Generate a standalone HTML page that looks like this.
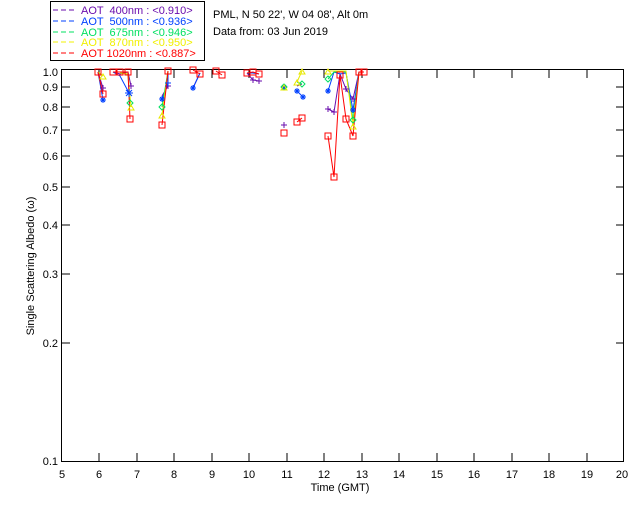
<!DOCTYPE html>
<html><head><style>
body{margin:0;background:#fff;}
svg text{font-family:"Liberation Sans",sans-serif;font-size:11px;}
</style></head><body>
<svg width="640" height="512" xmlns="http://www.w3.org/2000/svg">
<rect width="640" height="512" fill="#fff"/>
<rect x="50.5" y="1.5" width="154" height="59" fill="#fff" stroke="#000"/>
<g font-size="11">
<line x1="53" y1="10" x2="76" y2="10" stroke="#6a0dad" stroke-dasharray="5,3"/><text x="81" y="14" fill="#6a0dad" xml:space="preserve">AOT  400nm : &lt;0.910&gt;</text>
<line x1="53" y1="21" x2="76" y2="21" stroke="#0040ff" stroke-dasharray="5,3"/><text x="81" y="25" fill="#0040ff" xml:space="preserve">AOT  500nm : &lt;0.936&gt;</text>
<line x1="53" y1="32" x2="76" y2="32" stroke="#00e060" stroke-dasharray="5,3"/><text x="81" y="36" fill="#00e060" xml:space="preserve">AOT  675nm : &lt;0.946&gt;</text>
<line x1="53" y1="42" x2="76" y2="42" stroke="#f0f000" stroke-dasharray="5,3"/><text x="81" y="46" fill="#f0f000" xml:space="preserve">AOT  870nm : &lt;0.950&gt;</text>
<line x1="53" y1="53" x2="76" y2="53" stroke="#f00" stroke-dasharray="5,3"/><text x="81" y="57" fill="#f00" xml:space="preserve">AOT 1020nm : &lt;0.887&gt;</text>
</g>
<text x="213" y="18">PML, N 50 22', W 04 08', Alt 0m</text>
<text x="213" y="35">Data from: 03 Jun 2019</text>
<rect x="61.5" y="69.5" width="562" height="392" fill="none" stroke="#000"/>
<g stroke="#000">
<path d="M99 461v-8M99 70v8M137 461v-8M137 70v8M174 461v-8M174 70v8M212 461v-8M212 70v8M249 461v-8M249 70v8M287 461v-8M287 70v8M324 461v-8M324 70v8M362 461v-8M362 70v8M399 461v-8M399 70v8M437 461v-8M437 70v8M474 461v-8M474 70v8M512 461v-8M512 70v8M549 461v-8M549 70v8M587 461v-8M587 70v8"/>
<path d="M62 87h8M624 87h-8M62 107h8M624 107h-8M62 130h8M624 130h-8M62 156h8M624 156h-8M62 187h8M624 187h-8M62 225h8M624 225h-8M62 274h8M624 274h-8M62 343h8M624 343h-8"/>
</g>
<g font-size="10" text-anchor="end">
<text x="58" y="76">1.0</text><text x="58" y="91">0.9</text><text x="58" y="111">0.8</text><text x="58" y="134">0.7</text><text x="58" y="160">0.6</text><text x="58" y="191">0.5</text><text x="58" y="229">0.4</text><text x="58" y="278">0.3</text><text x="58" y="347">0.2</text><text x="58" y="465">0.1</text>
</g>
<g font-size="10" text-anchor="middle">
<text x="62" y="478">5</text><text x="99" y="478">6</text><text x="137" y="478">7</text><text x="174" y="478">8</text><text x="212" y="478">9</text><text x="249" y="478">10</text><text x="287" y="478">11</text><text x="324" y="478">12</text><text x="362" y="478">13</text><text x="399" y="478">14</text><text x="437" y="478">15</text><text x="474" y="478">16</text><text x="512" y="478">17</text><text x="549" y="478">18</text><text x="587" y="478">19</text><text x="622" y="478">20</text>
<text x="340" y="491">Time (GMT)</text>
</g>
<text transform="translate(34,266) rotate(-90)" font-size="10" text-anchor="middle">Single Scattering Albedo (ω)</text>
<g fill="none">
<g stroke="#6a0dad">
<polyline points="98,72 103,88"/><polyline points="113,72 120,74 128,72 131,86"/><polyline points="162,96 168,86 168,71"/><polyline points="193,88 200,73"/><polyline points="247,73 253,80 259,81"/><polyline points="297,86 302,84"/><polyline points="328,109 334,112 340,74 346,89 353,99 359,72 364,72"/>
</g>
<g stroke="#0040ff">
<polyline points="98,72 103,100"/><polyline points="113,72 120,76 129,93"/><polyline points="162,99 168,83 168,71"/><polyline points="193,88 200,73"/><polyline points="247,73 253,73 259,74"/><polyline points="297,91 303,97"/><polyline points="328,91 334,72 340,74 346,73 353,110 359,72 364,72"/>
</g>
<g stroke="#00e060">
<polyline points="98,72 103,76"/><polyline points="120,73 128,74 130,103"/><polyline points="162,107 168,71"/><polyline points="297,82 302,84"/><polyline points="328,79 334,72 346,72 353,120 359,72"/>
</g>
<g stroke="#e8e800">
<polyline points="98,72 103,76"/><polyline points="120,73 128,74 131,107"/><polyline points="162,115 168,71"/><polyline points="297,82 302,71"/><polyline points="328,71 334,71 346,71 353,126 359,72"/>
</g>
<g stroke="#f00">
<polyline points="98,72 103,94"/><polyline points="113,72 120,72 128,72 130,119"/><polyline points="162,125 168,71"/><polyline points="193,70 200,74"/><polyline points="216,71 222,75"/><polyline points="247,73 253,72 259,74"/><polyline points="297,122 302,118"/><polyline points="328,136 334,177 340,75 346,119 353,136 359,72 364,72"/>
</g>
</g>
<!-- markers -->
<g fill="none" stroke="#6a0dad">
<path d="M100 88h6M103 85v6M128 86h6M131 83v6M165 86h6M168 83v6M250 80h6M253 77v6M256 81h6M259 78v6M281 125h6M284 122v6M325 109h6M328 106v6M331 112h6M334 109v6M343 89h6M346 86v6M350 99h6M353 96v6"/>
</g>
<g fill="none" stroke="#0040ff">
<path d="M100 100h6M103 97v6M101 98l4 4M105 98l-4 4M125 93h8M129 89v8M126 90l6 6M132 90l-6 6M159 99h6M162 96v6M160 97l4 4M164 97l-4 4M165 83h6M168 80v6M190 88h6M193 85v6M191 86l4 4M195 86l-4 4M281 87h6M284 84v6M282 85l4 4M286 85l-4 4M294 91h6M297 88v6M295 89l4 4M299 89l-4 4M300 97h6M303 94v6M301 95l4 4M305 95l-4 4M325 91h6M328 88v6M326 89l4 4M330 89l-4 4M350 110h6M353 107v6M351 108l4 4M355 108l-4 4"/>
</g>
<g fill="none" stroke="#00e060">
<path d="M130 100l3 3-3 3-3-3zM162 104l3 3-3 3-3-3zM284 84l3 3-3 3-3-3zM302 81l3 3-3 3-3-3zM328 76l3 3-3 3-3-3zM353 117l3 3-3 3-3-3z"/>
</g>
<g fill="none" stroke="#e8e800">
<path d="M128 110l3-5 3 5zM159 118l3-5 3 5zM281 90l3-5 3 5zM294 85l3-5 3 5zM299 74l3-5 3 5zM325 74l3-5 3 5zM350 129l3-5 3 5zM100 79l3-5 3 5z"/>
</g>
<g fill="none" stroke="#f00">
<path d="M95 69h6v6h-6zM100 91h6v6h-6zM110 69h6v6h-6zM117 69h6v6h-6zM125 69h6v6h-6zM127 116h6v6h-6zM159 122h6v6h-6zM165 68h6v6h-6zM190 67h6v6h-6zM197 71h6v6h-6zM213 68h6v6h-6zM219 72h6v6h-6zM244 70h6v6h-6zM250 69h6v6h-6zM256 71h6v6h-6zM281 130h6v6h-6zM294 119h6v6h-6zM299 115h6v6h-6zM325 133h6v6h-6zM331 174h6v6h-6zM337 72h6v6h-6zM343 116h6v6h-6zM350 133h6v6h-6zM356 69h6v6h-6zM361 69h6v6h-6z"/>
</g>
</svg>
</body></html>
